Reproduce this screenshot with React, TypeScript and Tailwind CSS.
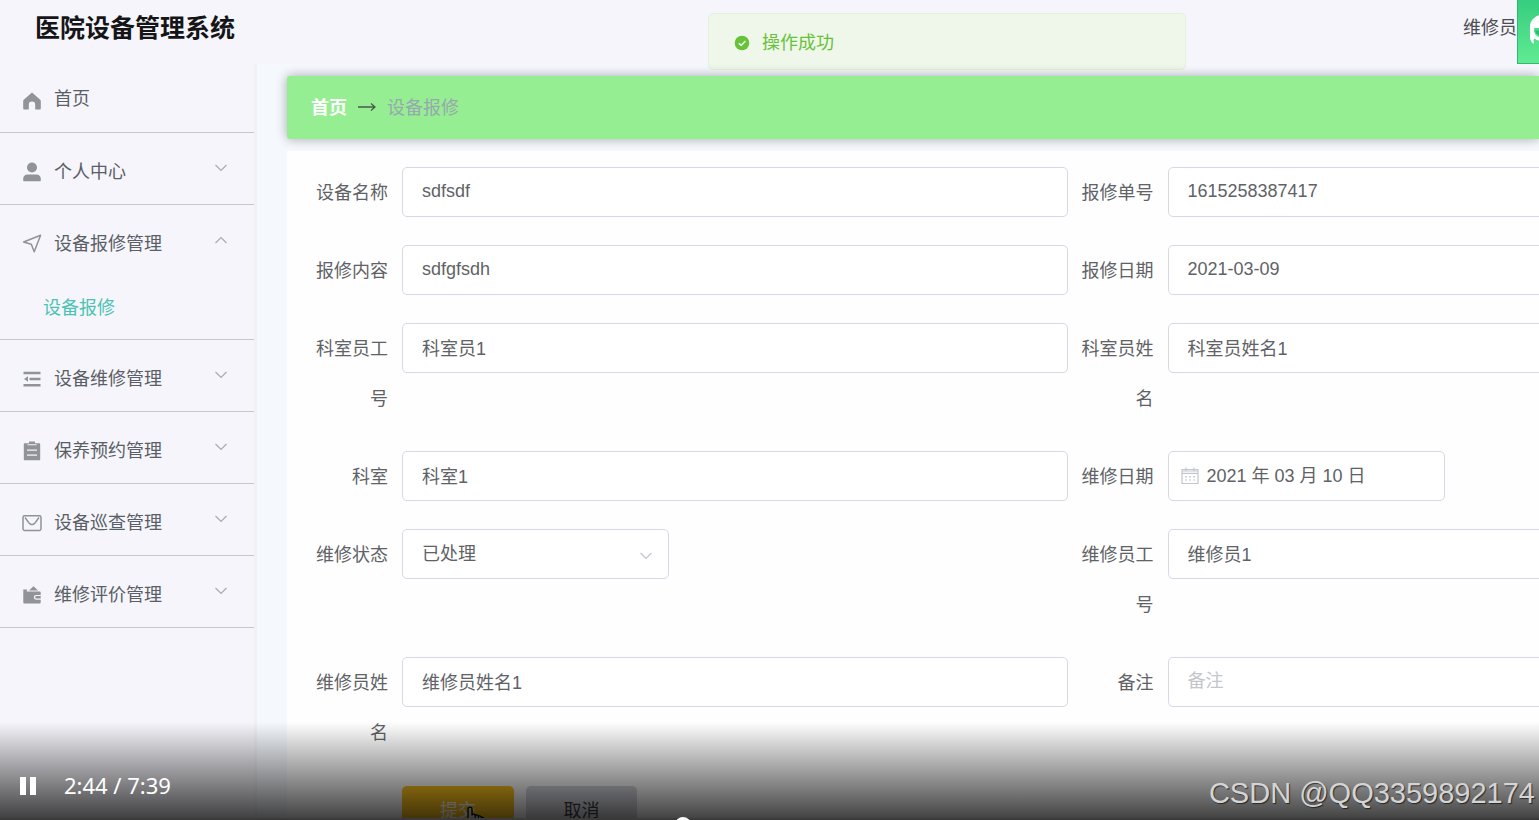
import type { ReactNode } from "react";

const cn = "font-['Liberation_Sans','Noto_Sans_CJK_SC',sans-serif]";

function Chevron({ up = false, className }: { up?: boolean; className: string }) {
  return (
    <svg viewBox="0 0 14 8" className={className} fill="none" stroke="currentColor" strokeWidth="1.2" aria-hidden="true">
      <path d={up ? "M1.500 7 7 1.500l5.500 5.500" : "M1.500 1l5.500 5.500 5.500-5.500"} />
    </svg>
  );
}

function Icon({ children }: { children: ReactNode }) {
  return (
    <svg viewBox="0 0 20 20" className="h-5 w-5 shrink-0 text-[#909399]" fill="currentColor" aria-hidden="true">
      {children}
    </svg>
  );
}

const icons = {
  home: (
    <Icon>
      <path d="M10 1.5 18 8.6c.5.4.8 1 .8 1.600V17.500c0 .6-.3.9-.9.9H13.200v-4.600a3.200 3.200 0 0 0-6.400 0v4.600H2.100c-.6 0-.9-.3-.9-.9V10.200c0-.6.3-1.200.8-1.600Z" />
    </Icon>
  ),
  user: (
    <Icon>
      <circle cx="10" cy="5.500" r="5" />
      <path d="M5.500 12.400h9c2.500 0 4.300 1.900 4.300 4.300v1.500c0 .6-.4 1-1 1H2.200c-.6 0-1-.4-1-1v-1.500c0-2.400 1.800-4.300 4.300-4.300Z" />
    </Icon>
  ),
  position: (
    <Icon>
      <path d="M18.600 1.200 12.200 17.800 9.300 10.300 1.600 8Z" fill="none" stroke="currentColor" strokeWidth="1.500" strokeLinejoin="round" />
    </Icon>
  ),
  fold: (
    <Icon>
      <path d="M1.500 2.800h17v2.400h-17Z M7.500 8.800h11v2.400h-11Z M1.500 15h17v2.400h-17Z M2 10l4-2.800v5.600Z" />
    </Icon>
  ),
  order: (
    <Icon>
      <path fillRule="evenodd" d="M7 .5h6v1.700h4.500c.4 0 .7.3.7.700v15.600c0 .4-.3.7-.7.700H2.500c-.4 0-.7-.3-.7-.7V2.900c0-.4.3-.7.700-.7H7Z M5.500 3.200v1.100h9V3.200Z M5 8.500v1.300h10V8.500Z M5 13.400v1.300h10v-1.300Z" />
    </Icon>
  ),
  message: (
    <Icon>
      <rect x="1" y="2.800" width="18" height="14.600" rx="1.600" fill="none" stroke="currentColor" strokeWidth="1.500" />
      <path d="M3 4.500 7.200 10.200c1.600 1.800 4 1.800 5.600 0L17 4.500" fill="none" stroke="currentColor" strokeWidth="1.400" />
    </Icon>
  ),
  wallet: (
    <Icon>
      <path d="M7 5.600 11.500 1.200l4.500 4.400Z" />
      <path d="M1.300 4.600h4L4.500 6.500h13.300c.5 0 .9.400.9.900v2.500h-4.500a2.400 2.400 0 0 0 0 4.800h4.500v2.800c0 .5-.4.9-.9.900H2.200c-.5 0-.9-.4-.9-.9Z" />
      <path d="M14.500 11h4.200v2.600h-4.200a1.300 1.300 0 0 1 0-2.600Z" />
    </Icon>
  ),
};

type Item = { label: string; icon: ReactNode; open?: boolean; child?: string };

const menu: Item[] = [
  { label: "个人中心", icon: icons.user },
  { label: "设备报修管理", icon: icons.position, open: true, child: "设备报修" },
  { label: "设备维修管理", icon: icons.fold },
  { label: "保养预约管理", icon: icons.order },
  { label: "设备巡查管理", icon: icons.message },
  { label: "维修评价管理", icon: icons.wallet },
];

function Sidebar() {
  return (
    <nav className="w-[257px] shrink-0 border-r-3 border-[#f1f1f3] bg-[#f5f5fb] text-[#5a5e66]">
      <ul>
        <li className="border-b border-[#c6c6cc]">
          <a href="#home" className="flex h-[68px] items-center gap-3 px-[22px] pt-1.5">
            {icons.home}
            <span className="-mt-1">首页</span>
          </a>
        </li>
        {menu.map((m) => (
          <li key={m.label} className="border-b border-[#c6c6cc]">
            <button type="button" aria-expanded={!!m.open} className="flex h-[71px] w-full items-center gap-3 px-[22px] pt-1.5 text-left">
              {m.icon}
              <span className="flex-1">{m.label}</span>
              <Chevron up={m.open} className="mr-1 mb-2 h-2 w-3.5 text-[#a9acb3]" />
            </button>
            {m.child && (
              <a href="#repair" className="flex h-[63px] items-center pl-[43px] text-[#4cc3b2]">
                {m.child}
              </a>
            )}
          </li>
        ))}
      </ul>
    </nav>
  );
}

const box = "h-[50px] rounded-[5px] border border-[#d8d8e4] bg-white text-[#606266] outline-none";

function Field({ id, label, children }: { id: string; label: string; children: ReactNode }) {
  return (
    <div className="flex items-start">
      <label htmlFor={id} className="-mb-px w-[100px] shrink-0 pt-px pr-3.5 text-right leading-[50px] text-[#606266]">
        {label}
      </label>
      {children}
    </div>
  );
}

function TextField({ id, label, value, placeholder }: { id: string; label: string; value?: string; placeholder?: string }) {
  return (
    <Field id={id} label={label}>
      <input
        id={id}
        type="text"
        defaultValue={value}
        placeholder={placeholder}
        className={`${box} min-w-0 flex-1 px-[19px] pb-0.5 placeholder:text-[#c4c6cc]`}
      />
    </Field>
  );
}

function RepairForm() {
  return (
    <form className="w-[125%] bg-[#fefefe] pt-4 pr-[19px] pl-[15px]">
      <div className="grid grid-cols-2 gap-y-7">
        <TextField id="name" label="设备名称" value="sdfsdf" />
        <TextField id="order" label="报修单号" value="1615258387417" />
        <TextField id="content" label="报修内容" value="sdfgfsdh" />
        <TextField id="date" label="报修日期" value="2021-03-09" />
        <TextField id="staff" label="科室员工号" value="科室员1" />
        <TextField id="staffName" label="科室员姓名" value="科室员姓名1" />
        <TextField id="dept" label="科室" value="科室1" />
        <Field id="fixDate" label="维修日期">
          <div className={`${box} flex w-[277px] items-center gap-2 px-3`}>
            <svg viewBox="0 0 18 18" className="h-[18px] w-[18px] shrink-0 text-[#c4c6cf]" fill="none" stroke="currentColor" strokeWidth="1.200" aria-hidden="true">
              <path d="M1 2.500h16v14H1Z M1 6.500h16" />
              <path d="M1 4.200h16" strokeWidth="2.500" opacity=".5" />
              <path d="M5 .5v3.500M13 .5v3.500" />
              <path d="M4 9.800h2M8 9.800h2M12 9.800h2M4 13h2M8 13h2M12 13h2" />
            </svg>
            <input id="fixDate" type="text" defaultValue="2021 年 03 月 10 日" className="min-w-0 flex-1 bg-transparent outline-none" />
          </div>
        </Field>
        <Field id="status" label="维修状态">
          <div className="relative">
            <select id="status" defaultValue="已处理" className={`${box} w-[267px] appearance-none px-[19px]`}>
              <option>已处理</option>
              <option>未处理</option>
            </select>
            <Chevron className="pointer-events-none absolute top-[23px] right-4 h-2 w-3.5 text-[#c0c4cc]" />
          </div>
        </Field>
        <TextField id="fixer" label="维修员工号" value="维修员1" />
        <TextField id="fixerName" label="维修员姓名" value="维修员姓名1" />
        <TextField id="remark" label="备注" placeholder="备注" />
        <div className="flex gap-3 pt-px pl-[100px]">
          <div className="relative">
            <button type="button" className="h-[50px] w-28 rounded-[5px] bg-[#fdc31c] text-white">
              提交
            </button>
            <svg viewBox="0 0 20 26" className="absolute top-[20px] left-[63px] h-[26px] w-5" fill="#d8d8d8" stroke="#000" strokeWidth="1.300" strokeLinejoin="round" aria-hidden="true">
              <path d="M3 2.800C3 .6 7 .6 7 2.800V9c.6-1.200 3-1 3.200.5.800-1 2.900-.8 3.200.9 1-.9 2.800-.5 3 1.100 1.200-.6 2.700 0 2.700 1.800V18c0 4-2.500 7-6 7h-2c-2.500 0-4-1.500-5.300-4L1 14.500c-.8-1.600 1-2.500 2-1.200Z" />
              <path d="M10.200 9.500V13M13.400 10.500V13M16.400 11.600V14" />
            </svg>
          </div>
          <button type="button" className="h-[50px] w-[111px] rounded-[5px] bg-[#d6d7df] text-[#3c3d40]">
            取消
          </button>
        </div>
      </div>
    </form>
  );
}

function PlayerBar() {
  return (
    <div className="absolute inset-x-0 bottom-0 z-30 flex h-[98px] items-end justify-between bg-linear-to-b from-black/0 to-black/75 pr-1">
      <div className="flex items-center gap-7 pb-[18px] pl-5 text-white">
        <button type="button" aria-label="暂停" className="flex gap-1">
          <span className="h-[18px] w-1.5 bg-white" />
          <span className="h-[18px] w-1.5 bg-white" />
        </button>
        <span className="pb-0.5 font-['Noto_Sans',sans-serif] text-[22px] leading-[30px]">2:44 / 7:39</span>
      </div>
      <span className="pb-2 text-[29px] leading-[38px] text-[#d4d4d4] [text-shadow:1px_1px_1px_rgba(0,0,0,0.6)]">
        CSDN @QQ3359892174
      </span>
      <div className="absolute inset-x-0 bottom-0 h-0.5 bg-[#3b3a3b]" />
      <div className="absolute -bottom-[13px] left-[44.400%] h-4 w-4 -translate-x-1/2 rounded-full bg-white" />
    </div>
  );
}

export default function App() {
  return (
    <div className={`relative flex h-screen flex-col overflow-hidden bg-[#f5f8fd] text-[18px] leading-7 ${cn}`}>
      <header className="flex h-16 shrink-0 items-center justify-between bg-[#f5f5fb] pr-[22px] pb-[9px] pl-[35px]">
        <h1 className="text-[25px] leading-9 font-bold text-[#151518]">医院设备管理系统</h1>
        <span className="text-[#4c4d52]">维修员</span>
      </header>
      <div className="flex min-h-0 flex-1">
        <Sidebar />
        <main className="min-w-0 flex-1 pt-3 pl-[30px]">
          <div className="relative z-20 mb-3 flex h-[63px] items-center gap-2.5 rounded-l-[3px] bg-[#96ee92] pl-6 shadow-[0_0_12px_rgba(0,0,0,0.33)]">
            <a href="#home" className="font-bold text-white">首页</a>
            <svg viewBox="0 0 20 12" className="h-3 w-5" fill="none" stroke="#4a5a4a" strokeWidth="1.300" aria-hidden="true">
              <path d="M1 5h17M14 1.500 18 5l-4 3.500" />
            </svg>
            <span className="text-[#97a8ae]">设备报修</span>
          </div>
          <RepairForm />
        </main>
      </div>

      <div role="status" className="absolute top-[13px] left-[46%] z-10 flex h-[57px] w-[478px] items-center gap-3 rounded-[5px] border border-[#e4f2dc] bg-[#eff7ea] px-[25px] pt-0.5 text-[#67c23a]">
        <svg viewBox="0 0 16 16" className="h-4 w-4" aria-hidden="true">
          <circle cx="8" cy="8" r="7.300" fill="#67c23a" />
          <path d="M4.800 8.200 7.200 10.400 11.400 6" fill="none" stroke="#effae8" strokeWidth="1.500" />
        </svg>
        操作成功
      </div>

      <div className="absolute top-0 right-0 z-20 h-16 w-[22px] overflow-hidden border-b border-l border-[#2fb878] bg-linear-to-b from-[#35cd80] to-[#5feb92]">
        <svg viewBox="0 0 22 64" className="h-16 w-[22px]" fill="none" aria-hidden="true">
          <path d="M22 15c-7 2-10.500 7-10 13 .2 4 0 6 0 9 0 2 .5 4.500 4 7-.8-3-.5-4.500.5-5.500C18.500 40 20 40.500 22 41v-3.500C18.500 36.500 16.500 34 16 31c0-5 2.500-8.500 6-10Z" fill="#fff" />
          <path d="M16 24.500 22 21v7h-5.500Z" fill="#fff" />
          <path d="M17 30.500h5v5c-2.500-.4-4.500-2.500-5-5Z" fill="#2ebc74" />
        </svg>
      </div>

      <PlayerBar />
    </div>
  );
}
